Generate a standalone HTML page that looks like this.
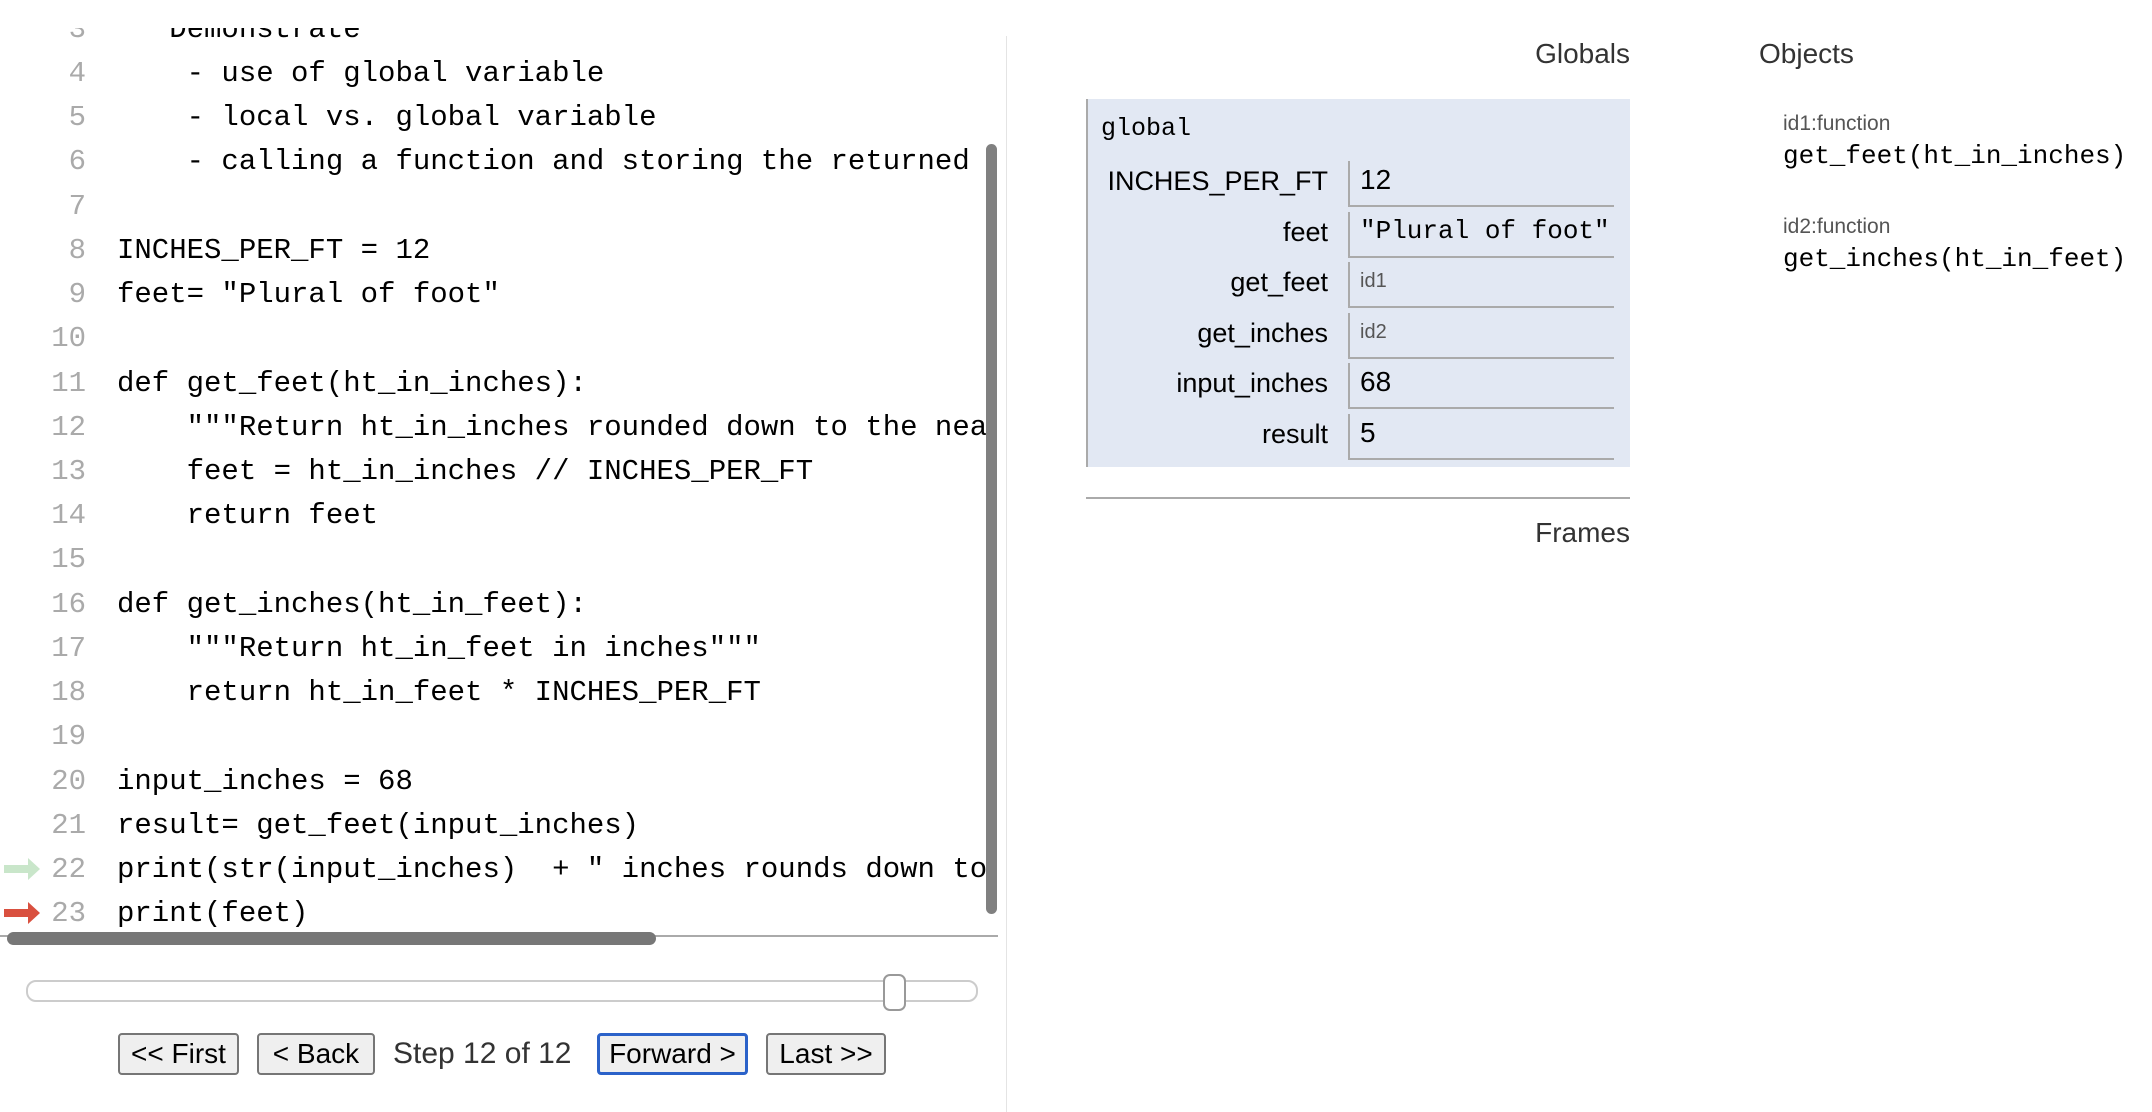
<!DOCTYPE html>
<html><head><meta charset="utf-8"><style>
body{margin:0;width:2152px;height:1112px;background:#fff;position:relative;overflow:hidden;font-family:"Liberation Sans",sans-serif;}
.clip{position:absolute;left:0;top:28px;width:997px;height:900px;overflow:hidden;}
.ln{position:absolute;left:0;height:44px;line-height:44px;font-family:"Liberation Mono",monospace;font-size:29px;white-space:pre;color:#000;}
.ln .n{display:inline-block;width:86px;text-align:right;color:#aaa;}
.ln .c{position:absolute;left:117px;top:0;}
.abs{position:absolute;}
.btn{position:absolute;top:1033px;height:42px;box-sizing:border-box;border:2px solid #767676;border-radius:4px;background:#efefef;font-size:28px;line-height:38px;text-align:center;color:#000;}
.hdr{position:absolute;font-size:28px;color:#333;}
.nm{position:absolute;right:calc(2152px - 1328px);font-size:27px;color:#000;text-align:right;line-height:36px;}
.cell{position:absolute;left:1348px;width:266px;height:46px;border-left:2px solid #aaa;border-bottom:2px solid #aaa;box-sizing:border-box;}
.cell span{position:absolute;left:10px;top:0;line-height:38px;}
</style></head><body>
<div class="clip">
<div class="ln" style="top:-20px"><span class="n">3</span><span class="c">   Demonstrate</span></div>
<div class="ln" style="top:24px"><span class="n">4</span><span class="c">    - use of global variable</span></div>
<div class="ln" style="top:68px"><span class="n">5</span><span class="c">    - local vs. global variable</span></div>
<div class="ln" style="top:112px"><span class="n">6</span><span class="c">    - calling a function and storing the returned value</span></div>
<div class="ln" style="top:157px"><span class="n">7</span><span class="c"></span></div>
<div class="ln" style="top:201px"><span class="n">8</span><span class="c">INCHES_PER_FT = 12</span></div>
<div class="ln" style="top:245px"><span class="n">9</span><span class="c">feet= "Plural of foot"</span></div>
<div class="ln" style="top:289px"><span class="n">10</span><span class="c"></span></div>
<div class="ln" style="top:334px"><span class="n">11</span><span class="c">def get_feet(ht_in_inches):</span></div>
<div class="ln" style="top:378px"><span class="n">12</span><span class="c">    """Return ht_in_inches rounded down to the nearest foot"""</span></div>
<div class="ln" style="top:422px"><span class="n">13</span><span class="c">    feet = ht_in_inches // INCHES_PER_FT</span></div>
<div class="ln" style="top:466px"><span class="n">14</span><span class="c">    return feet</span></div>
<div class="ln" style="top:510px"><span class="n">15</span><span class="c"></span></div>
<div class="ln" style="top:555px"><span class="n">16</span><span class="c">def get_inches(ht_in_feet):</span></div>
<div class="ln" style="top:599px"><span class="n">17</span><span class="c">    """Return ht_in_feet in inches"""</span></div>
<div class="ln" style="top:643px"><span class="n">18</span><span class="c">    return ht_in_feet * INCHES_PER_FT</span></div>
<div class="ln" style="top:687px"><span class="n">19</span><span class="c"></span></div>
<div class="ln" style="top:732px"><span class="n">20</span><span class="c">input_inches = 68</span></div>
<div class="ln" style="top:776px"><span class="n">21</span><span class="c">result= get_feet(input_inches)</span></div>
<div class="ln" style="top:820px"><span class="n">22</span><span class="c">print(str(input_inches)  + " inches rounds down to " + str(result))</span></div>
<div class="ln" style="top:864px"><span class="n">23</span><span class="c">print(feet)</span></div>
</div>
<svg class="abs" style="left:2px;top:857px" width="40" height="70">
<path d="M2 8 H26 V1 L38 12 L26 23 V16 H2 Z" fill="#c9e6ca"/>
<path d="M2 52 H26 V45 L38 56 L26 67 V60 H2 Z" fill="#d9503f"/>
</svg>
<div class="abs" style="left:0;top:935px;width:998px;height:2px;background:#aaa"></div>
<div class="abs" style="left:7px;top:932px;width:649px;height:13px;background:#777;border-radius:7px"></div>
<div class="abs" style="left:986px;top:144px;width:11px;height:770px;background:#808080;border-radius:6px"></div>
<div class="abs" style="left:1006px;top:36px;width:1px;height:1076px;background:#e4e4e4"></div>
<div class="abs" style="left:26px;top:980px;width:952px;height:22px;box-sizing:border-box;border:2px solid #ccc;border-radius:10px"></div>
<div class="abs" style="left:883px;top:974px;width:23px;height:37px;box-sizing:border-box;border:2px solid #999;border-radius:7px;background:#fff"></div>
<div class="btn" style="left:118px;width:121px">&lt;&lt; First</div>
<div class="btn" style="left:257px;width:118px">&lt; Back</div>
<div class="abs" style="left:393px;top:1033px;line-height:42px;font-size:30px;color:#333">Step 12 of 12</div>
<div class="btn" style="left:597px;width:151px;border:3px solid #2b62c9;line-height:36px">Forward &gt;</div>
<div class="btn" style="left:766px;width:120px">Last &gt;&gt;</div>
<div class="hdr" style="right:522px;top:38px">Globals</div>
<div class="hdr" style="left:1759px;top:38px">Objects</div>
<div class="abs" style="left:1086px;top:99px;width:544px;height:368px;background:#e2e8f3;border-left:2px solid #aaa;box-sizing:border-box"></div>
<div class="abs" style="left:1101px;top:112px;font-family:'Liberation Mono',monospace;font-size:25px;line-height:34px">global</div>

<div class="nm" style="top:163px">INCHES_PER_FT</div>
<div class="cell" style="top:161px"><span style="font-size:28px">12</span></div>
<div class="nm" style="top:214px">feet</div>
<div class="cell" style="top:212px"><span style="font-family:'Liberation Mono',monospace;font-size:26px">"Plural of foot"</span></div>
<div class="nm" style="top:264px">get_feet</div>
<div class="cell" style="top:262px"><span style="font-size:20px;color:#555">id1</span></div>
<div class="nm" style="top:315px">get_inches</div>
<div class="cell" style="top:313px"><span style="font-size:20px;color:#555">id2</span></div>
<div class="nm" style="top:365px">input_inches</div>
<div class="cell" style="top:363px"><span style="font-size:28px">68</span></div>
<div class="nm" style="top:416px">result</div>
<div class="cell" style="top:414px"><span style="font-size:28px">5</span></div>

<div class="abs" style="left:1086px;top:497px;width:544px;height:2px;background:#aaa"></div>
<div class="hdr" style="right:522px;top:517px">Frames</div>

<div class="abs" style="left:1783px;top:112px;font-size:21px;color:#555">id1:function</div>
<div class="abs" style="left:1783px;top:141px;font-family:'Liberation Mono',monospace;font-size:26px">get_feet(ht_in_inches)</div>
<div class="abs" style="left:1783px;top:215px;font-size:21px;color:#555">id2:function</div>
<div class="abs" style="left:1783px;top:244px;font-family:'Liberation Mono',monospace;font-size:26px">get_inches(ht_in_feet)</div>
</body></html>
